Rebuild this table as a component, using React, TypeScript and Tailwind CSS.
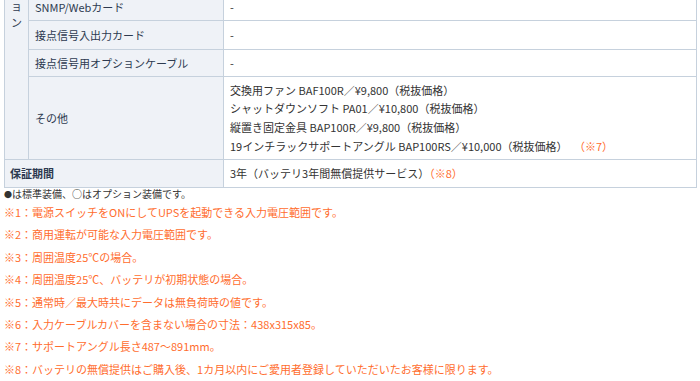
const notes = [
  "※1：電源スイッチをONにしてUPSを起動できる入力電圧範囲です。",
  "※2：商用運転が可能な入力電圧範囲です。",
  "※3：周囲温度25℃の場合。",
  "※4：周囲温度25℃、バッテリが初期状態の場合。",
  "※5：通常時／最大時共にデータは無負荷時の値です。",
  "※6：入力ケーブルカバーを含まない場合の寸法：438x315x85。",
  "※7：サポートアングル長さ487～891mm。",
  "※8：バッテリの無償提供はご購入後、1カ月以内にご愛用者登録していただいたお客様に限ります。",
];

const options = [
  "交換用ファン BAF100R／¥9,800（税抜価格）",
  "シャットダウンソフト PA01／¥10,800（税抜価格）",
  "縦置き固定金具 BAP100R／¥9,800（税抜価格）",
];

const cell = "border border-[#c6d1dd]";
const label = `${cell} bg-[#eff2f7] px-[6px] text-[#2d3a50]`;
const value = `${cell} bg-white px-[6px] text-[#333]`;

export default function App() {
  return (
    <div className="h-[381px] w-[700px] overflow-hidden bg-white pl-[4px] text-[11px] font-['Noto_Sans_CJK_JP','Noto_Sans',sans-serif]">
      <table className="-mt-[9px] w-[693px] border-collapse">
        <colgroup>
          <col className="w-[22px]" />
          <col className="w-[195px]" />
          <col />
        </colgroup>
        <tbody>
          <tr className="h-[29px]">
            <td rowSpan={4} className={`${label} align-top px-0 text-center`}>
              <div className="flex flex-col items-center pt-[6px] leading-[16px]">
                <span>ョ</span>
                <span>ン</span>
              </div>
            </td>
            <td className={`${label} pt-[2px]`}>SNMP/Webカード</td>
            <td className={`${value} pt-[2px]`}>-</td>
          </tr>
          <tr className="h-[29px]">
            <td className={label}>接点信号入出力カード</td>
            <td className={value}>-</td>
          </tr>
          <tr className="h-[27px]">
            <td className={label}>接点信号用オプションケーブル</td>
            <td className={value}>-</td>
          </tr>
          <tr className="h-[83px]">
            <td className={label}>その他</td>
            <td className={`${value} py-[3px] leading-[18.6px] text-[#1f4f9e]`}>
              {options.map((o) => (
                <div key={o}>{o}</div>
              ))}
              <div>
                19インチラックサポートアングル BAP100RS／¥10,000（税抜価格）
                <span className="ml-[12px] text-[#ff6d2e]">（※7）</span>
              </div>
            </td>
          </tr>
          <tr className="h-[28px]">
            <td colSpan={2} className={`${label} pl-[5px] font-bold text-[#1c2c58]`}>
              保証期間
            </td>
            <td className={value}>
              3年（バッテリ3年間無償提供サービス）
              <span className="text-[#ff6d2e]">（※8）</span>
            </td>
          </tr>
        </tbody>
      </table>
      <p className="text-[10px] leading-[12px] text-[#333]">
        <span className="text-[8px]">●</span>は標準装備、○はオプション装備です。
      </p>
      <ul className="text-[#ff6d2e]">
        {notes.map((n) => (
          <li key={n} className="leading-[22.4px]">
            {n}
          </li>
        ))}
      </ul>
    </div>
  );
}
